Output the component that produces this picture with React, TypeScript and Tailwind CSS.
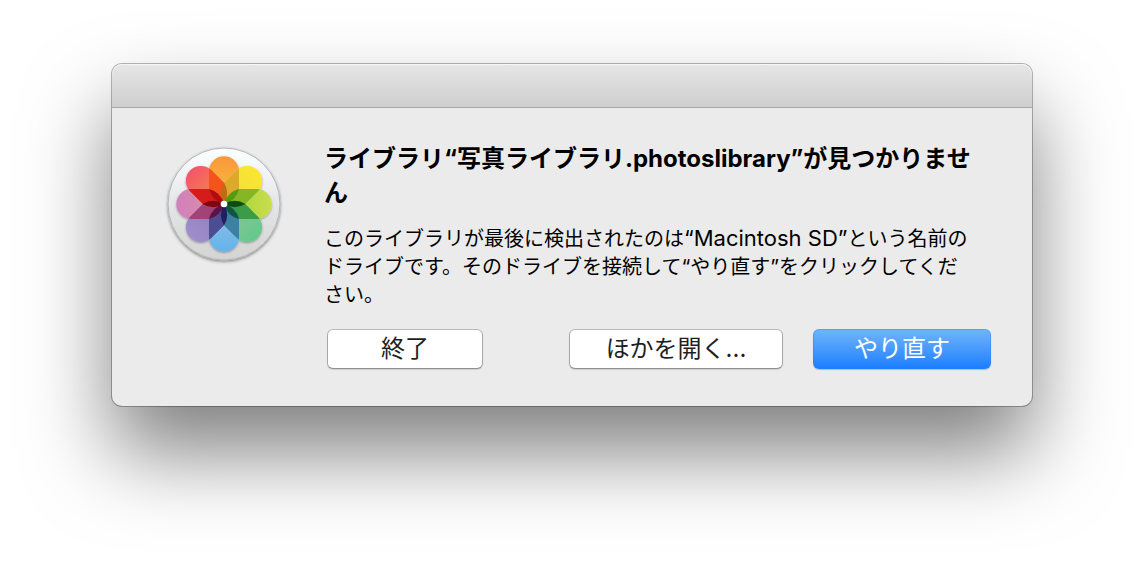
const petals = [
  { outer: '#f8973a', inner: '#fbb63e' },
  { outer: '#fbe631', inner: '#f2df3c' },
  { outer: '#cbdd4b', inner: '#a8d63e' },
  { outer: '#62c98c', inner: '#86c496' },
  { outer: '#62b4ec', inner: '#8cbbe6' },
  { outer: '#a08dcb', inner: '#8f83c0' },
  { outer: '#d27fbd', inner: '#d88fa6' },
  { outer: '#f2556a', inner: '#f8804f' },
];
const overlaps = ['#dba92b', '#85b724', '#3c9b49', '#3c80a4', '#4d4d94', '#a04478', '#d61b1d', '#f4531a'];
const lenses = ['#bf6d14', '#569a12', '#0d4d12', '#0e5640', '#211f5c', '#5c1448', '#7c0812', '#ac0e12'];
const petalPath = 'M0 0Q-35 -10 -45 -45V-98A45 45 0 0 1 45 -98V-45Q35 -10 0 0Z';

function PhotosIcon() {
  return (
    <svg viewBox="-180 -180 360 360" className="size-[120px] shrink-0 overflow-visible" role="img" aria-label="写真">
      <defs>
        <linearGradient id="disc" x1="0" y1="0" x2="0" y2="1">
          <stop offset="0" stopColor="#fcffff" />
          <stop offset="0.5" stopColor="#e4e6e7" />
          <stop offset="1" stopColor="#d3d3d2" />
        </linearGradient>
        {petals.map((petal, i) => (
          <linearGradient key={petal.outer} id={`petal${i}`} x1="0" y1="0" x2="0" y2="1">
            <stop offset="0" stopColor={petal.outer} />
            <stop offset="0.7" stopColor={petal.inner} />
          </linearGradient>
        ))}
        <filter id="discShadow" x="-20%" y="-20%" width="140%" height="140%">
          <feDropShadow dx="0" dy="4" stdDeviation="4" floodColor="#000" floodOpacity="0.45" />
        </filter>
        <filter id="petalShadow" x="-20%" y="-20%" width="140%" height="140%">
          <feDropShadow dx="0" dy="3" stdDeviation="3" floodColor="#000" floodOpacity="0.35" />
        </filter>
        <clipPath id="nextPetal">
          <path d={petalPath} transform="rotate(45)" />
        </clipPath>
      </defs>
      <circle r="168" fill="url(#disc)" stroke="#b3b5b6" strokeWidth="3" filter="url(#discShadow)" />
      <g filter="url(#petalShadow)">
        {petals.map((petal, i) => (
          <path key={petal.outer} d={petalPath} fill={`url(#petal${i})`} transform={`rotate(${i * 45})`} />
        ))}
      </g>
      {overlaps.map((color, i) => (
        <g key={color} transform={`rotate(${i * 45})`}>
          <path d={petalPath} fill={color} clipPath="url(#nextPetal)" />
        </g>
      ))}
      {lenses.map((color, i) => (
        <path key={color} d="M0 0Q-19 -32 0 -64Q19 -32 0 0Z" fill={color} transform={`rotate(${i * 45})`} />
      ))}
      <circle r="10" fill="#fff" />
    </svg>
  );
}

const button = 'h-10 rounded-md border pb-px text-2xl leading-none';
const plain =
  'border-black/20 border-b-black/30 bg-white bg-clip-padding text-[#1f1f1f] shadow-[0_1px_1px_rgba(0,0,0,0.12)]';

export default function App() {
  return (
    <main
      lang="ja"
      className="min-h-screen overflow-hidden bg-white px-28 py-16 font-['Inter','Noto_Sans_CJK_JP',sans-serif] text-black"
    >
      <section
        role="alertdialog"
        aria-labelledby="dialog-title"
        aria-describedby="dialog-message"
        className="rounded-[10px] bg-[#ebebeb] shadow-[0_0_0_1px_rgba(0,0,0,0.28),0_46px_84px_rgba(0,0,0,0.5)]"
      >
        <header className="h-11 rounded-t-[10px] border-b border-[#a9a9a9] bg-linear-to-b from-[#e7e7e7] to-[#cecece] shadow-[inset_0_1px_0_#f5f5f5]" />
        <div className="flex gap-10 pt-[34px] pr-10 pb-[37px] pl-[52px]">
          <div className="pt-0.5">
            <PhotosIcon />
          </div>
          <div className="min-w-0 flex-1">
            <h1 id="dialog-title" className="text-2xl leading-[34px] font-bold">
              ライブラリ“写真ライブラリ.photoslibrary”が見つかりません
            </h1>
            <p id="dialog-message" className="mt-[15px] pr-4 text-xl leading-7">
              このライブラリが最後に検出されたのは<span className="text-[22px] leading-none">“Macintosh SD”</span>
              という名前のドライブです。そのドライブを接続して“やり直す”をクリックしてください。
            </p>
            <div className="mt-5 flex items-center pr-px pl-[3px]">
              <button type="button" className={`${button} ${plain} w-[156px]`}>終了</button>
              <button type="button" className={`${button} ${plain} ml-auto w-[214px]`}>ほかを開く...</button>
              <button
                type="button"
                className={`${button} ml-[30px] w-[178px] border-[#2a85f5]/40 bg-linear-to-b from-[#6fb5f9] to-[#167dff] bg-origin-border text-white shadow-[0_1px_1px_rgba(0,0,0,0.2)]`}
              >
                やり直す
              </button>
            </div>
          </div>
        </div>
      </section>
    </main>
  );
}
